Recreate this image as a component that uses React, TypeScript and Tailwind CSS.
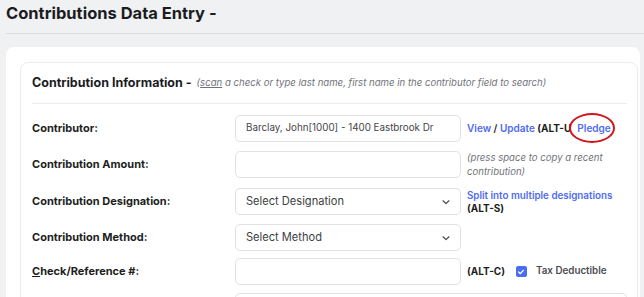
import React from "react";

const Chevron = () => (
  <svg width="10" height="10" viewBox="0 0 24 24" fill="none" stroke="#3f4248" strokeWidth="2.6" strokeLinecap="round" strokeLinejoin="round">
    <path d="M5 9l7 7 7-7" />
  </svg>
);

const inputCls =
  "w-[226px] h-[27px] shrink-0 rounded-[5px] border border-[#dfe1e5] bg-white flex items-center pl-[10px] pr-[9px] whitespace-nowrap";

function Row({
  label,
  children,
  right,
  cls = "",
}: {
  label: React.ReactNode;
  children?: React.ReactNode;
  right?: React.ReactNode;
  cls?: string;
}) {
  return (
    <div className={"flex items-center h-[27px] " + cls}>
      <div className="w-[203px] shrink-0 text-[11px] font-bold text-[#1d1e21] whitespace-nowrap">{label}</div>
      {children}
      <div className="ml-[6px] text-[10px] whitespace-nowrap">{right}</div>
    </div>
  );
}

export default function App() {
  return (
    <div
      className="w-[644px] h-[297px] overflow-hidden bg-[#f0f1f3]"
      style={{ fontFamily: "Inter, 'Noto Sans', sans-serif" }}
    >
      <div className="ml-[6px] h-[34px] border-b border-[#dcdde1]">
        <h1 className="text-[16.5px] font-bold text-[#1b1c1f] leading-[26px] whitespace-nowrap">Contributions Data Entry -</h1>
      </div>
      <div className="ml-[6px] mt-[13px] w-[634px] bg-white rounded-[8px] pl-[14px] pt-[15px] h-[300px]">
        <div className="w-[618px] rounded-[8px] border border-[#ebecee] pl-[11px] pr-[10px] h-[300px]">
          <div className="h-[41px] flex items-center border-b border-[#ededef] whitespace-nowrap">
            <span className="text-[12.5px] font-bold text-[#1b1c1f]">Contribution Information -</span>
            <span className="ml-[5px] text-[9.6px] italic text-[#707278]">
              (<span className="underline">scan</span> a check or type last name, first name in the contributor field to search)
            </span>
          </div>
          <div className="flex flex-col pt-[11px]">
            <Row
              label="Contributor:"
              right={
                <span className="font-semibold">
                  <span className="text-[#4f6cf0]">View</span>
                  <span className="text-[#1d1e21]"> / </span>
                  <span className="text-[#4f6cf0]">Update</span>
                  <span className="text-[#1d1e21] font-bold"> (ALT-U</span>
                  <span className="relative ml-[6px] text-[#4f6cf0]">
                    Pledge
                    <span className="absolute left-[-8px] top-[-9px] w-[46px] h-[30px] rounded-[50%] border-[2.5px] border-[#d0161c]" />
                  </span>
                </span>
              }
            >
              <div className={inputCls + " text-[9.8px] text-[#444549]"}>Barclay, John[1000] - 1400 Eastbrook Dr</div>
            </Row>
            <Row
              cls="mt-[9px]"
              label="Contribution Amount:"
              right={
                <div className="italic text-[#707278] leading-[13.5px] text-[9.6px]">
                  (press space to copy a recent
                  <br />
                  contribution)
                </div>
              }
            >
              <div className={inputCls} />
            </Row>
            <Row
              cls="mt-[10px]"
              label="Contribution Designation:"
              right={
                <div className="leading-[13px] font-semibold">
                  <div className="text-[#4f6cf0] text-[9.8px]">Split into multiple designations</div>
                  <div className="text-[#1d1e21] font-bold">(ALT-S)</div>
                </div>
              }
            >
              <div className={inputCls + " justify-between text-[11.1px] text-[#3d3e42]"}>
                <span>Select Designation</span>
                <Chevron />
              </div>
            </Row>
            <Row cls="mt-[9px]" label="Contribution Method:">
              <div className={inputCls + " justify-between text-[11.1px] text-[#3d3e42]"}>
                <span>Select Method</span>
                <Chevron />
              </div>
            </Row>
            <Row
              cls="mt-[7px]"
              label={
                <span>
                  <span className="underline">C</span>heck/Reference #:
                </span>
              }
              right={
                <div className="flex items-center">
                  <span className="font-bold text-[#1d1e21]">(ALT-C)</span>
                  <span className="ml-[11px] w-[11px] h-[11px] rounded-[2px] bg-[#4a6cf2] flex items-center justify-center">
                    <svg width="8" height="8" viewBox="0 0 24 24" fill="none" stroke="white" strokeWidth="4" strokeLinecap="round" strokeLinejoin="round">
                      <path d="M5 12l5 5 9-10" />
                    </svg>
                  </span>
                  <span className="ml-[9px] font-semibold text-[#4a4c51] text-[9.8px]">Tax Deductible</span>
                </div>
              }
            >
              <div className={inputCls} />
            </Row>
            <div className="flex mt-[8px]">
              <div className="w-[203px] shrink-0" />
              <div className="w-[392px] h-[27px] rounded-[5px] border border-[#dfe1e5]" />
            </div>
          </div>
        </div>
      </div>
    </div>
  );
}
